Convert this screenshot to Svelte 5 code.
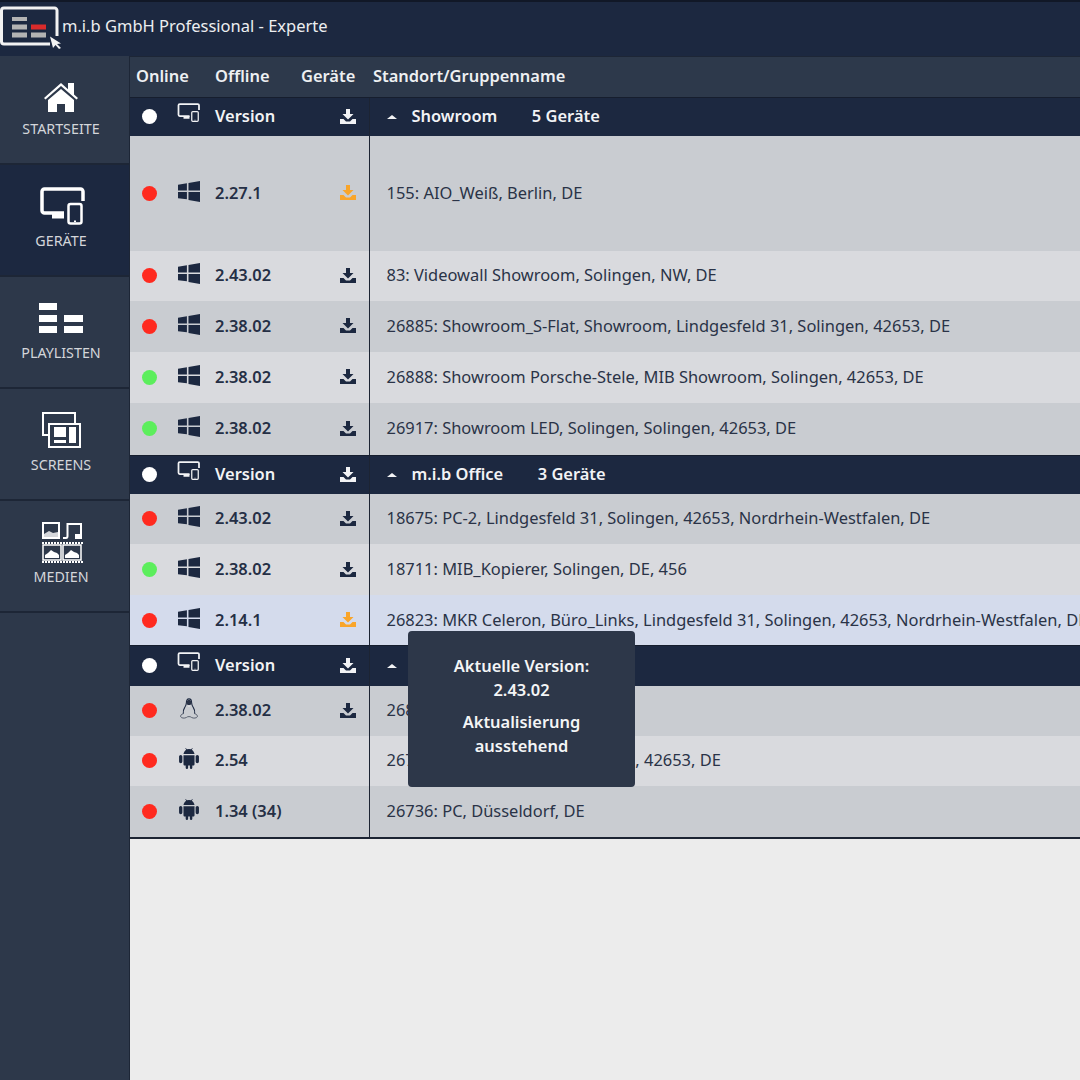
<script lang="ts">
    const navItems = [
        { label: "STARTSEITE", icon: "home" },
        { label: "GERÄTE", icon: "devices", active: true },
        { label: "PLAYLISTEN", icon: "playlist" },
        { label: "SCREENS", icon: "screens" },
        { label: "MEDIEN", icon: "media" },
    ];

    const groups = [
        {
            name: "Showroom",
            count: "5 Geräte",
            height: 38.5,
            rows: [
                { on: false, os: "win", version: "2.27.1", dl: "orange", text: "155: AIO_Weiß, Berlin, DE", height: 115 },
                { on: false, os: "win", version: "2.43.02", dl: "dark", text: "83: Videowall Showroom, Solingen, NW, DE", height: 50 },
                { on: false, os: "win", version: "2.38.02", dl: "dark", text: "26885: Showroom_S-Flat, Showroom, Lindgesfeld 31, Solingen, 42653, DE", height: 51 },
                { on: true, os: "win", version: "2.38.02", dl: "dark", text: "26888: Showroom Porsche-Stele, MIB Showroom, Solingen, 42653, DE", height: 51.5 },
                { on: true, os: "win", version: "2.38.02", dl: "dark", text: "26917: Showroom LED, Solingen, Solingen, 42653, DE", height: 51.5 },
            ],
        },
        {
            name: "m.i.b Office",
            count: "3 Geräte",
            height: 39,
            rows: [
                { on: false, os: "win", version: "2.43.02", dl: "dark", text: "18675: PC-2, Lindgesfeld 31, Solingen, 42653, Nordrhein-Westfalen, DE", height: 50.5 },
                { on: true, os: "win", version: "2.38.02", dl: "dark", text: "18711: MIB_Kopierer, Solingen, DE, 456", height: 51 },
                { on: false, os: "win", version: "2.14.1", dl: "orange", text: "26823: MKR Celeron, Büro_Links, Lindgesfeld 31, Solingen, 42653, Nordrhein-Westfalen, DE", height: 50, hover: true },
            ],
        },
        {
            name: "Sonstige",
            count: "3 Geräte",
            height: 40.5,
            rows: [
                { on: false, os: "linux", version: "2.38.02", dl: "dark", text: "26860: Showroom, Solingen, DE", height: 50 },
                { on: false, os: "android", version: "2.54", dl: "", text: "26739: Android Box, Lindgesfeld, 42653, DE", height: 50 },
                { on: false, os: "android", version: "1.34 (34)", dl: "", text: "26736: PC, Düsseldorf, DE", height: 51.5 },
            ],
        },
    ];
</script>

{#snippet devices(cls)}
    <svg class={cls} viewBox="0 0 48 48">
        <path d="M46 16V6.500A2.500 2.500 0 0 0 43.500 4H7.500A2.500 2.500 0 0 0 5 6.500V25.500A2.500 2.500 0 0 0 7.500 28H27" fill="none" stroke="currentColor" stroke-width="3.500" />
        <path d="M15 28h12v5.500H15z" fill="currentColor" />
        <rect x="31.500" y="19" width="13" height="19.500" rx="2" fill="none" stroke="currentColor" stroke-width="2.500" />
        <path d="M37 35.500h2v1.500h-2z" fill="currentColor" />
    </svg>
{/snippet}

{#snippet download(cls)}
    <svg class={cls} viewBox="0 0 16 15">
        <path d="M6 0h4v5h3.500L8 10.500 2.500 5H6z" fill="currentColor" />
        <path d="M0 10h3.500L6 12.500h4L12.500 10H16v5H0z" fill="currentColor" />
    </svg>
{/snippet}

{#snippet osIcon(os)}
    {#if os === "win"}
        <svg class="os" viewBox="0 0 21 20">
            <path d="M0 3.500 8.500 2.200V9H0zM10 2 21 0v9H10zM0 10.500h8.500v7L0 16.500zM10 10.500h11V20L10 18z" fill="#1c2840" />
        </svg>
    {:else if os === "linux"}
        <svg class="os" viewBox="0 0 21 24">
            <path d="M10.500 1C8.200 1 7.500 3 7.500 5.500c0 2.500-.7 3.500-2 5.500C4 13.300 3.500 15.500 4 18M10.500 1c2.300 0 3 2 3 4.500 0 2.500.7 3.500 2 5.500 1.500 2.300 2 4.500 1.500 7" fill="none" stroke="#1c2840" stroke-width="1.200" />
            <path d="M7.500 5.500c0-1.500 1.300-3.500 3-3.500s3 2 3 3.500l-.5 2-2.500 1.500L8 7.500z" fill="#2a3347" />
            <path d="M8.500 7.500c1.200 1 2.800 1 4 0l-1 2.500h-2z" fill="#e2e3e5" />
            <path d="M4 18c-2 .3-3.500 2-3 3.500.6 1.500 4.500 2 6.500.8.800-.5 1-1 3-1s2.200.5 3 1c2 1.200 5.900.7 6.500-.8.500-1.500-1-3.200-3-3.500" fill="none" stroke="#4a5262" stroke-width="1" />
        </svg>
    {:else}
        <svg class="os" viewBox="0 0 18 19">
            <path d="M4 5.500C4.300 3.500 5.300 2.200 6.500 1.500L5.600.3l.4-.3 1.100 1.200a5 5 0 0 1 3.800 0L12 0l.4.3-.9 1.200C12.700 2.200 13.700 3.500 14 5.500zM4 6.500h10v8.200c0 .7-.5 1.100-1.100 1.100H12v2.100a1.100 1.100 0 0 1-2.200 0v-2.100H8.200v2.100a1.100 1.100 0 0 1-2.200 0v-2.100h-.900C4.500 15.800 4 15.400 4 14.700zM1.500 6.300C2.300 6.300 3 7 3 7.800v4.400a1.500 1.500 0 0 1-3 0V7.800c0-.8.700-1.500 1.500-1.500zM16.500 6.300c.8 0 1.500.7 1.500 1.500v4.400a1.500 1.500 0 0 1-3 0V7.800c0-.8.700-1.500 1.500-1.500z" fill="#1c2840" />
        </svg>
    {/if}
{/snippet}

{#snippet navIcon(icon)}
    {#if icon === "home"}
        <svg class="nav-icon" viewBox="0 0 48 48">
            <path d="M24 10 7 25l1.500 1.500L24 13l15.500 13.500L41 25l-4-3.500V10h-6v6.200z" fill="currentColor" />
            <path d="M24 16 11 27v12h9v-8h8v8h9V27z" fill="currentColor" />
        </svg>
    {:else if icon === "devices"}
        {@render devices("nav-icon")}
    {:else if icon === "playlist"}
        <svg class="nav-icon" viewBox="0 0 48 48">
            <path d="M2 6h18v7H2zM2 18h18v7H2zM2 29h18v7H2zM27 18h19v7H27zM27 29h19v7H27z" fill="currentColor" />
        </svg>
    {:else if icon === "screens"}
        <svg class="nav-icon" viewBox="0 0 48 48">
            <path d="M11 26H6V4h32v10" fill="none" stroke="currentColor" stroke-width="2" />
            <rect x="12" y="15" width="31" height="23" fill="none" stroke="currentColor" stroke-width="2" />
            <path d="M17 18h12v10H17zM17 31h12v3H17zM32 18h7v16h-7z" fill="currentColor" />
        </svg>
    {:else}
        <svg class="nav-icon" viewBox="0 0 48 48">
            <rect x="6" y="2" width="16" height="15" fill="none" stroke="currentColor" stroke-width="2" />
            <path d="M7 16v-3l5-3 4 2 5-1v5z" fill="currentColor" opacity="0.8" />
            <path d="M26 17h3c1.200 0 1.500-1 1.500-2V3H44v14" fill="none" stroke="currentColor" stroke-width="2" />
            <path d="M38 13h7v5h-7z" fill="currentColor" />
            <path d="M5 22h41M5 41h41" stroke="currentColor" stroke-width="2" stroke-dasharray="2 1" />
            <rect x="6" y="24" width="18" height="15" fill="none" stroke="currentColor" stroke-width="1.500" />
            <rect x="26" y="24" width="18" height="15" fill="none" stroke="currentColor" stroke-width="1.500" />
            <path d="M8 37v-3l3-2 3-3 3 2 3 1 2 2v3zM28 37v-3l3-2 3-3 3 2 3 1 2 2v3z" fill="currentColor" />
        </svg>
    {/if}
{/snippet}

<div class="app">
    <header class="topbar">
        <svg class="logo" viewBox="0 0 64 50">
            <path d="M50 44H4a2.500 2.500 0 0 1-2.500-2.500V10.500A2.500 2.500 0 0 1 4 8h50.500A2.500 2.500 0 0 1 57 10.500V36" fill="none" stroke="#f2f2f2" stroke-width="3" />
            <path d="M12 17h15v4H12zM12 24.500h15v5H12zM12 32.500h15v5H12zM31 32.500h15v5H31z" fill="#b3b3b3" />
            <path d="M31 24.500h15v5H31z" fill="#d92b2b" />
            <path d="M50 36.500 61 43.500l-4 .5 4 4-2 1-3.500-4-2.500 3z" fill="#f2f2f2" />
        </svg>
        <span class="title">m.i.b GmbH Professional - Experte</span>
    </header>

    <div class="body">
        <nav class="sidebar">
            {#each navItems as item}
                <div class="nav-item" class:active={item.active}>
                    {@render navIcon(item.icon)}
                    <span>{item.label}</span>
                </div>
            {/each}
        </nav>

        <main class="content">
            <div class="head">
                <span class="h-online">Online</span>
                <span class="h-offline">Offline</span>
                <span class="h-devices">Geräte</span>
                <span>Standort/Gruppenname</span>
            </div>

            {#each groups as group}
                <div class="row group-row" style="height: {group.height}px">
                    <div class="left">
                        <span class="dot white"></span>
                        {@render devices("group-icon")}
                        <span class="version">Version</span>
                        {@render download("dl")}
                    </div>
                    <div class="right">
                        <span class="caret"></span>
                        <span class="group-name">{group.name}</span>
                        <span class="group-count">{group.count}</span>
                    </div>
                </div>
                {#each group.rows as row, i}
                    <div class="row item" class:alt={i % 2 === 1} class:hover={row.hover} style="height: {row.height}px">
                        <div class="left">
                            <span class="dot" class:green={row.on} class:red={!row.on}></span>
                            {@render osIcon(row.os)}
                            <span class="version">{row.version}</span>
                            {#if row.dl}
                                {@render download(row.dl === "orange" ? "dl orange" : "dl")}
                            {/if}
                        </div>
                        <div class="right"><span class="info">{row.text}</span></div>
                    </div>
                {/each}
            {/each}
            <div class="end"></div>

            <div class="tooltip">
                <p>Aktuelle Version:<br />2.43.02</p>
                <p>Aktualisierung<br />ausstehend</p>
            </div>
        </main>
    </div>
</div>

<style>
    :global(body) {
        margin: 0;
        background: #ececec;
        overflow: hidden;
    }

    .app {
        width: 1080px;
        height: 1080px;
        display: flex;
        flex-direction: column;
        font-family: "Noto Sans", "Open Sans", sans-serif;
        overflow: hidden;
    }

    .topbar {
        flex: none;
        height: 56px;
        box-sizing: border-box;
        background: #1c2840;
        border-top: 2px solid #111827;
        display: flex;
        color: #eceef0;
    }

    .logo {
        width: 64px;
        height: 50px;
        flex: none;
        margin-top: -2px;
    }

    .title {
        font-size: 16.5px;
        line-height: 20px;
        margin-left: -2px;
        margin-top: 14px;
    }

    .body {
        flex: 1;
        display: flex;
        min-height: 0;
    }

    .sidebar {
        flex: none;
        width: 130px;
        box-sizing: border-box;
        background: #2d384a;
        border-right: 1px solid #1d2636;
    }

    .nav-item {
        height: 112px;
        box-sizing: border-box;
        padding: 20px 7px 0 0;
        border-bottom: 2px solid #1d2636;
        display: flex;
        flex-direction: column;
        align-items: center;
        color: #fff;
    }

    .nav-item:first-child {
        height: 109px;
        padding-top: 17px;
    }

    .nav-item.active {
        background: #1c2840;
    }

    .nav-item span {
        font-size: 14.3px;
        color: #d4d6da;
        margin-top: -2px;
        line-height: 20px;
    }

    .nav-icon {
        width: 48px;
        height: 48px;
        flex: none;
    }

    .content {
        flex: 1;
        min-width: 0;
        position: relative;
        background: #ececec;
    }

    .head {
        height: 41px;
        box-sizing: border-box;
        background: #2d394b;
        border-top: 1px solid #1d2636;
        display: flex;
        align-items: center;
        padding: 0 0 3px 6px;
        font-size: 16.45px;
        font-weight: 600;
        color: #eef0f2;
    }

    .h-online {
        width: 79px;
    }

    .h-offline {
        width: 86px;
    }

    .h-devices {
        width: 72px;
    }

    .row {
        display: flex;
        box-sizing: border-box;
        white-space: nowrap;
    }

    .left {
        flex: none;
        width: 240px;
        box-sizing: border-box;
        border-right: 1px solid #1c2433;
        display: flex;
        align-items: center;
        padding-left: 12px;
        position: relative;
    }

    .right {
        flex: 1;
        min-width: 0;
        display: flex;
        align-items: center;
        padding-left: 16.5px;
    }

    .group-row {
        background: #1c2840;
        color: #f2f3f5;
        font-size: 16.45px;
        font-weight: 600;
        border-top: 1px solid #161e2e;
    }

    .caret {
        width: 0;
        height: 0;
        border-left: 5px solid transparent;
        border-right: 5px solid transparent;
        border-bottom: 4px solid #f2f3f5;
        margin-right: 15px;
    }

    .group-name,
    .group-count {
        margin-bottom: 2px;
    }

    .group-name {
        margin-right: 34.5px;
    }

    .item {
        background: #c9ccd1;
        color: #1c2840;
    }

    .item.alt {
        background: #d9dade;
    }

    .item.hover {
        background: #d4dbec;
    }

    .item .version {
        font-weight: 600;
        color: #252f45;
    }

    .info {
        font-size: 16.45px;
        color: #2a3347;
        margin-bottom: 2px;
    }

    .dot {
        width: 15px;
        height: 15px;
        border-radius: 50%;
        flex: none;
    }

    .dot.white {
        background: #fff;
    }

    .dot.red {
        background: #ff2a1f;
    }

    .dot.green {
        background: #5cee5c;
    }

    .os {
        width: 22px;
        height: 21px;
        margin-left: 20.5px;
        margin-top: -4px;
        flex: none;
    }

    .group-icon {
        width: 24px;
        height: 24px;
        margin-left: 19px;
        margin-top: -6px;
        flex: none;
    }

    .version {
        position: absolute;
        left: 85px;
        font-size: 16.45px;
        margin-bottom: 2px;
    }

    .dl {
        position: absolute;
        left: 210px;
        top: 50%;
        margin-top: -8px;
        width: 16px;
        height: 15px;
    }

    .item .dl {
        color: #1c2840;
    }

    .item .dl.orange {
        color: #f9a52a;
    }

    .end {
        height: 2px;
        background: #1c2433;
    }

    .tooltip {
        position: absolute;
        left: 278px;
        top: 575px;
        width: 227px;
        height: 156px;
        box-sizing: border-box;
        padding-top: 23px;
        background: #2d3749;
        border-radius: 4px;
        color: #f4f5f6;
        text-align: center;
        font-size: 16.45px;
        font-weight: 600;
        line-height: 24px;
    }

    .tooltip p {
        margin: 0 0 8px;
    }
</style>
